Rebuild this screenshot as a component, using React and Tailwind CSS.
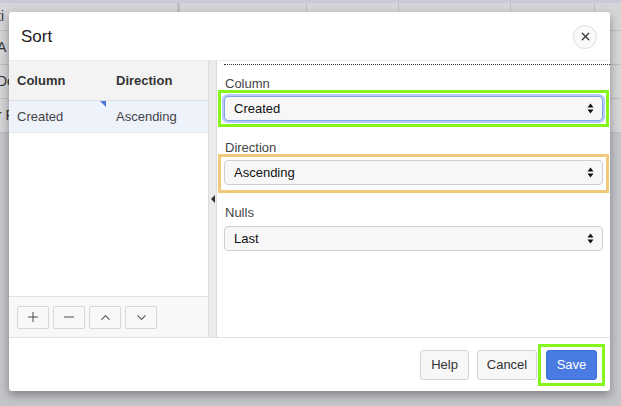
import { X, Plus, Minus, ChevronUp, ChevronDown } from "lucide-react";

const font = { fontFamily: '"Liberation Sans", Arial, sans-serif' };

const SelectBox = ({ value, focused }) => (
  <div
    className={`relative h-[25px] rounded-[4px] border bg-[#f7f7f7] flex items-center pl-[9px] pr-[8px] text-[13px] text-[#111] ${
      focused
        ? "border-[#7fa4ea] shadow-[0_0_0_2px_rgba(120,160,240,0.55)]"
        : "border-[#cfcfcf]"
    }`}
  >
    <span className="flex-1">{value}</span>
    <svg width="7" height="11" viewBox="0 0 7 11" className="text-[#111]">
      <path d="M3.5 0.5 L6.5 4.5 L0.5 4.5 Z" fill="currentColor" />
      <path d="M3.5 10.5 L6.5 6.5 L0.5 6.5 Z" fill="currentColor" />
    </svg>
  </div>
);

const ToolButton = ({ children }) => (
  <button className="w-[32px] h-[23px] flex items-center justify-center rounded-[2px] border border-[#d6d6d6] bg-[#f8f8f8] text-[#333]">
    {children}
  </button>
);

const BackgroundGrid = () => {
  const rows = ["ti", "A", "De", "r F"];
  return (
    <div className="w-full h-full flex flex-col bg-[#c3c5ca]">
      <div className="h-[3px] bg-[#c8cad9]" />
      {rows.map((r, i) => (
        <div
          key={i}
          className={`flex border-b border-[#bdbdc0] bg-[#d5d5d7] ${i === 0 ? "h-[28px]" : "h-[34px]"}`}
        >
          <div className="w-[183px] border-r-[3px] border-[#bcbcbe] flex items-center text-[14px] text-[#333] -ml-[3px]">
            {r}
          </div>
          <div className="w-[127px] border-r border-[#bdbdc0]" />
          <div className="w-[92px] border-r border-[#bdbdc0]" />
          <div className="w-[112px] border-r border-[#bdbdc0]" />
          <div className="w-[84px] border-r border-[#bdbdc0]" />
          <div className="flex-1" />
        </div>
      ))}
    </div>
  );
};

export default function App() {
  return (
    <div className="relative w-[621px] h-[406px] overflow-hidden" style={font}>
      <BackgroundGrid />

      <div className="absolute left-[9px] top-[12px] w-[601px] h-[379px] bg-white rounded-[3px] shadow-[0_4px_10px_rgba(0,0,0,0.35)] flex flex-col">
        {/* header */}
        <div className="h-[49px] flex items-center justify-between pl-[12px] pr-[13px] pt-[1px] border-b border-[#ececec]">
          <span className="text-[17px] text-[#222]">Sort</span>
          <button className="w-[24px] h-[24px] rounded-full border border-[#dcdcdc] bg-[#fafafa] flex items-center justify-center text-[#333]">
            <X size={13} strokeWidth={2.2} />
          </button>
        </div>

        {/* body */}
        <div className="flex-1 flex min-h-0">
          <div className="w-[199px] flex flex-col">
            <div className="h-[40px] flex items-center bg-[#f3f3f3] border-b border-[#dedede] text-[13px] font-bold text-[#333]">
              <div className="w-[99px] pl-[8px]">Column</div>
              <div className="flex-1 pl-[8px]">Direction</div>
            </div>
            <div className="h-[32px] flex items-center bg-[#eef2fb] border-b border-[#e4e8f0] text-[13px] text-[#444]">
              <div className="relative w-[99px] h-full flex items-center pl-[8px]">
                Created
                <svg width="6" height="6" viewBox="0 0 6 6" className="absolute right-[2px] top-0">
                  <path d="M0 0 L6 0 L6 6 Z" fill="#4a78d8" />
                </svg>
              </div>
              <div className="flex-1 pl-[8px]">Ascending</div>
            </div>
            <div className="flex-1" />
            <div className="h-[41px] flex items-center gap-[4px] pl-[8px] bg-[#f8f8f8] border-t border-[#e2e2e2]">
              <ToolButton>
                <Plus size={16} strokeWidth={1.3} />
              </ToolButton>
              <ToolButton>
                <Minus size={16} strokeWidth={1.3} />
              </ToolButton>
              <ToolButton>
                <ChevronUp size={15} strokeWidth={1.8} className="text-[#555]" />
              </ToolButton>
              <ToolButton>
                <ChevronDown size={15} strokeWidth={1.8} className="text-[#555]" />
              </ToolButton>
            </div>
          </div>

          {/* splitter */}
          <div className="w-[9px] bg-[#ebebeb] border-l border-r border-[#dcdcdc] flex items-center justify-center">
            <svg width="4" height="8" viewBox="0 0 4 8" className="mt-[-1px]">
              <path d="M0 4 L4 0 L4 8 Z" fill="#333" />
            </svg>
          </div>

          {/* right pane */}
          <div className="flex-1 flex flex-col px-[1px]">
            <div className="mt-[3px] ml-[6px] -mr-[1px] border-t border-dotted border-[#333]" />

            <div className="mt-[11px] pl-[7px] text-[13px] text-[#444] leading-[16px]">Column</div>
            <div className="mt-[-2px] border-[3px] border-[#86f51c] p-[3px]">
              <SelectBox value="Created" focused />
            </div>

            <div className="mt-[13px] pl-[7px] text-[13px] text-[#444] leading-[16px]">Direction</div>
            <div className="mt-[-2px] border-[3px] border-[#f0c97b] pt-[3px] px-[3px] pb-[5px]">
              <SelectBox value="Ascending" />
            </div>

            <div className="mt-[12px] pl-[7px] text-[13px] text-[#444] leading-[16px]">Nulls</div>
            <div className="mt-[5px] px-[6px]">
              <SelectBox value="Last" />
            </div>
          </div>
        </div>

        {/* footer */}
        <div className="h-[54px] border-t border-[#e2e2e2] flex items-center justify-end pr-[5px] text-[13px]">
          <button className="h-[30px] w-[49px] rounded-[3px] border border-[#d3d3d3] bg-[#f7f7f7] text-[#333]">
            Help
          </button>
          <button className="ml-[8px] h-[30px] w-[60px] rounded-[3px] border border-[#d3d3d3] bg-[#f7f7f7] text-[#333]">
            Cancel
          </button>
          <div className="ml-[1px] border-[3px] border-[#86f51c] px-[5px] py-[3px]">
            <button className="h-[30px] w-[51px] rounded-[3px] border border-[#3f6fd8] bg-[#4a7be2] text-white">
              Save
            </button>
          </div>
        </div>
      </div>
    </div>
  );
}
